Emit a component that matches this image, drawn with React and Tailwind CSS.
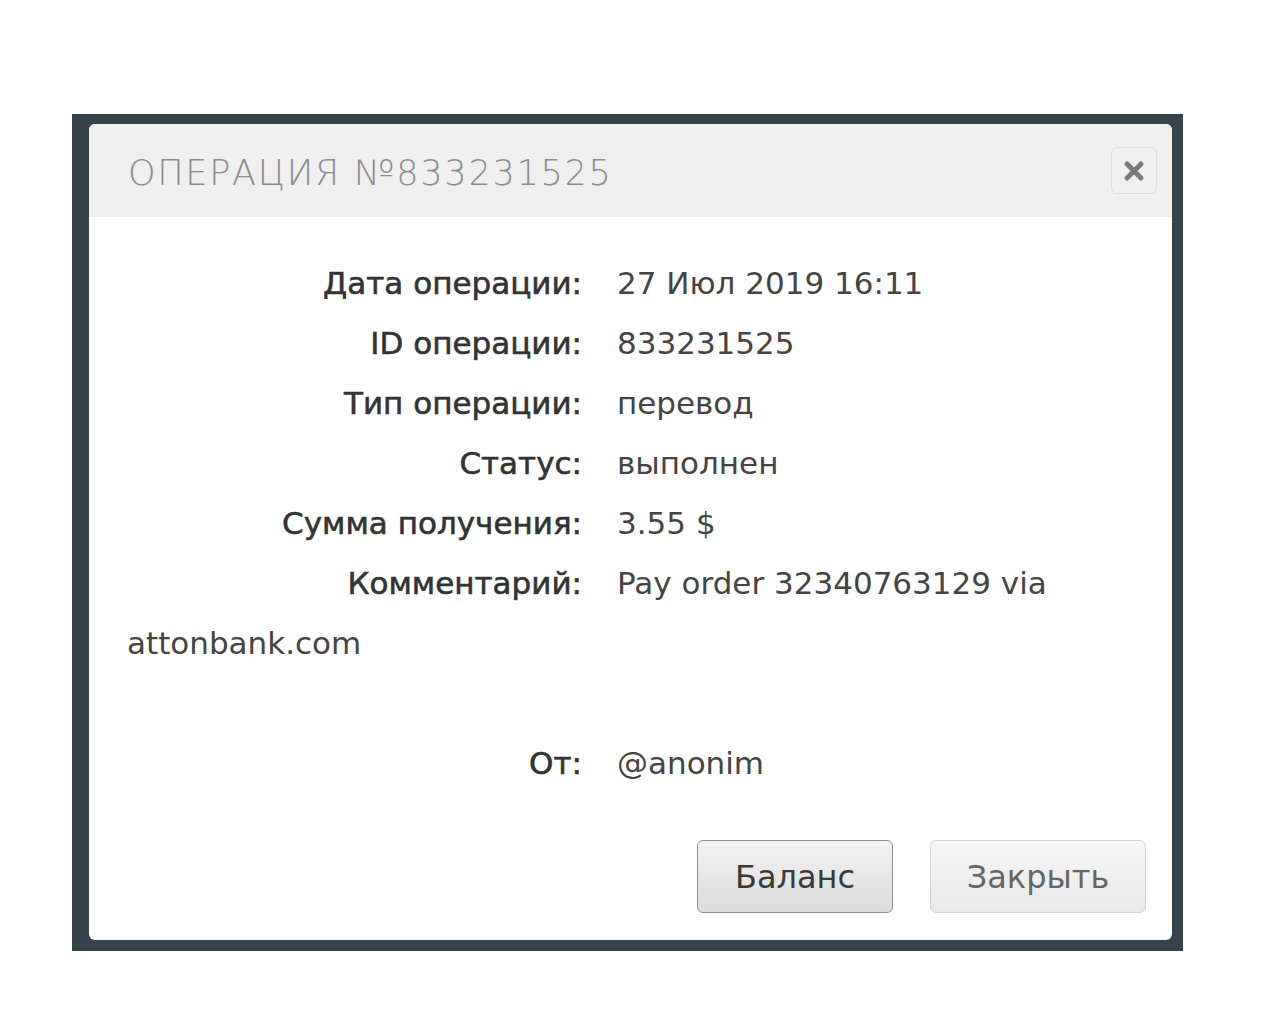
export default function App() {
  const rows = [
    ["Дата операции:", "27 Июл 2019 16:11"],
    ["ID операции:", "833231525"],
    ["Тип операции:", "перевод"],
    ["Статус:", "выполнен"],
    ["Сумма получения:", "3.55 $"],
  ];

  const labelCls =
    "inline-block w-[455px] text-right text-[#333] mr-[35px] [-webkit-text-stroke:0.6px_#333]";

  return (
    <main className="min-h-screen w-full bg-white pt-[114px] pl-[72px]">
      <div className="w-[1111px] h-[837px] bg-[#36434b] pt-[10px] pl-[17px] pr-[11px] pb-[11px]">
        <div className="h-full bg-white rounded-[6px] overflow-hidden flex flex-col">
          <div className="h-[93px] bg-[#efefef] flex items-center justify-between pl-[39px] pr-[15px]">
            <h2 className="pt-[5px] font-['DejaVu_Sans',sans-serif] text-[35px] tracking-[0.05em] text-[#8c8c8c] font-light">
              ОПЕРАЦИЯ №833231525
            </h2>
            <button className="w-[46px] h-[47px] rounded-[6px] border border-[#dcdcdc] bg-[#efefef] flex items-center justify-center">
              <svg width="22" height="22" viewBox="0 0 22 22">
                <path d="M4 4 L18 18 M18 4 L4 18" stroke="#7a7a7a" strokeWidth="5" strokeLinecap="round" />
              </svg>
            </button>
          </div>

          <div className="flex-1 pt-[36px] px-[38px] font-['DejaVu_Sans',sans-serif] text-[31px] leading-[60px] text-[#444]">
            {rows.map(([label, value]) => (
              <div key={label}>
                <span className={labelCls}>{label}</span>
                {value}
              </div>
            ))}
            <div>
              <span className={labelCls}>Комментарий:</span>
              Pay order 32340763129 via attonbank.com
            </div>
            <div className="h-[60px]" />
            <div>
              <span className={labelCls}>От:</span>
              @anonim
            </div>

            <div className="flex justify-end gap-[37px] mt-[47px] mr-[-12px]">
              <button className="w-[196px] h-[73px] rounded-[6px] border border-[#8f8f8f] bg-gradient-to-b from-[#f2f2f2] to-[#dcdcdc] text-[32px] text-[#3a3a3a] font-['DejaVu_Sans',sans-serif]">
                Баланс
              </button>
              <button className="w-[216px] h-[73px] rounded-[6px] border border-[#d4d4d4] bg-gradient-to-b from-[#f6f6f6] to-[#e8e8e8] text-[32px] text-[#666] font-['DejaVu_Sans',sans-serif]">
                Закрыть
              </button>
            </div>
          </div>
        </div>
      </div>
    </main>
  );
}
